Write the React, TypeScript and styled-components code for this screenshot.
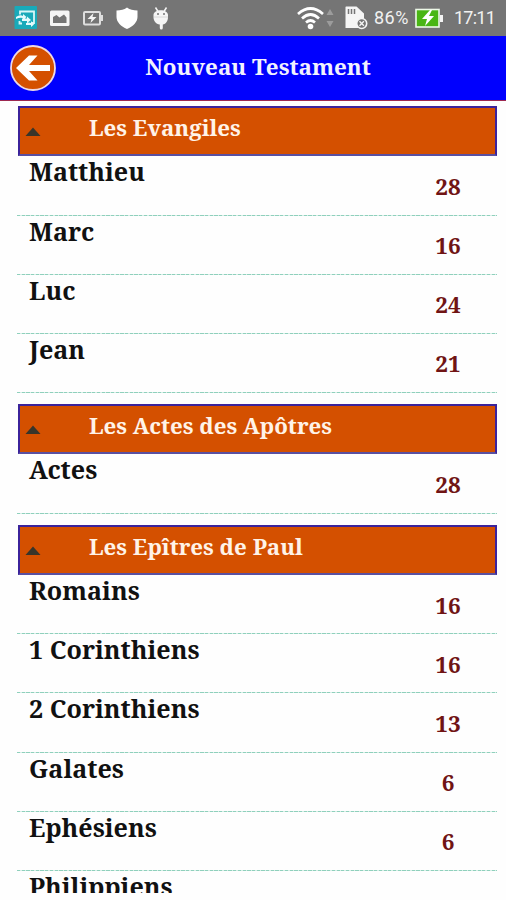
import React from "react";
import styled, { createGlobalStyle } from "styled-components";

const GlobalStyle = createGlobalStyle`
  * { box-sizing: border-box; }
  body { margin: 0; background: #fefefe; }
`;

const serif = `"Noto Serif", "DejaVu Serif Condensed", "DejaVu Serif", serif`;

const Screen = styled.div`
  width: 506px;
  height: 900px;
  display: flex;
  flex-direction: column;
  overflow: hidden;
  background: #fefefe;
  font-family: ${serif};
  font-weight: 700;
`;

const StatusBar = styled.header`
  height: 36px;
  flex: none;
  display: flex;
  justify-content: space-between;
  background: #757575;
`;

const StatusIcons = styled.svg`
  display: block;
  flex: none;
`;

const StatusRight = styled.div`
  display: flex;
  align-items: center;
  width: 212px;
  color: #f1f1f1;
  font: 400 18px/36px Roboto, sans-serif;
`;

const Percent = styled.span`
  width: 40px;
  letter-spacing: 0.5px;
`;

const Clock = styled.span`
  width: 50px;
  letter-spacing: -0.75px;
`;

const TitleBar = styled.div`
  height: 65px;
  flex: none;
  display: grid;
  grid-template-columns: 66px 1fr 56px;
  align-items: center;
  background: #0000fe;
  border-bottom: 1px solid #9c2850;
`;

const BackButton = styled.button`
  width: 48px;
  height: 48px;
  margin-left: 9px;
  padding: 0;
  border: 0;
  background: none;
  svg { display: block; }
`;

const Title = styled.h1`
  margin: 0;
  padding-bottom: 2px;
  text-align: center;
  color: #f2f2ff;
  font-size: 22.4px;
  line-height: 30px;
  white-space: nowrap;
`;

const List = styled.main`
  height: 792px;
  flex: none;
  overflow: hidden;
  padding: 4.9px 9px 0 17px;
`;

const Section = styled.section`
  margin-bottom: 11px;
`;

const SectionHeader = styled.h2`
  height: 50.5px;
  margin: 0 0 0 1px;
  padding: 0 0 5.5px 5px;
  display: grid;
  grid-template-columns: 64px 1fr;
  align-items: center;
  background: #d45000;
  border: 2px solid #3b239b;
  border-bottom-color: #5a50a0;
  color: #fff3e8;
  font-size: 22.3px;
  line-height: 30px;
  white-space: nowrap;
`;

const Marker = styled.svg`
  display: block;
  margin-top: 6.5px;
`;

const Book = styled.div`
  height: 59.15px;
  display: grid;
  grid-template-columns: 1fr 76px;
  padding: 0 11px 0 12px;
`;

const BookName = styled.span`
  color: #111;
  font-size: 25.1px;
  line-height: 30.4px;
  white-space: nowrap;
`;

const Chapters = styled.span`
  padding-top: 14.5px;
  text-align: center;
  color: #701414;
  font-size: 22.5px;
  line-height: 32px;
`;

const Divider = styled.div`
  grid-column: 1 / -1;
  align-self: end;
  height: 1px;
  margin: 0 -11px 0 -12px;
  background: repeating-linear-gradient(90deg, #8fd0bc 0 3.2px, #d5eee6 3.2px 4.7px);
`;

type BookEntry = { name: string; chapters?: number };

const groups: { title: string; books: BookEntry[] }[] = [
  {
    title: "Les Evangiles",
    books: [
      { name: "Matthieu", chapters: 28 },
      { name: "Marc", chapters: 16 },
      { name: "Luc", chapters: 24 },
      { name: "Jean", chapters: 21 },
    ],
  },
  { title: "Les Actes des Apôtres", books: [{ name: "Actes", chapters: 28 }] },
  {
    title: "Les Epîtres de Paul",
    books: [
      { name: "Romains", chapters: 16 },
      { name: "1 Corinthiens", chapters: 16 },
      { name: "2 Corinthiens", chapters: 13 },
      { name: "Galates", chapters: 6 },
      { name: "Ephésiens", chapters: 6 },
      { name: "Philippiens" },
    ],
  },
];

const NotificationIcons = () => (
  <StatusIcons width="180" height="36" viewBox="0 0 180 36" fill="none">
    <rect x="14.5" y="6" width="22.5" height="23" rx="1" fill="#19aaba" />
    <path d="M20 14.500V11.500H34V23H32M22 23.500H19.500V21" stroke="#d9f7f8" strokeWidth="1.8" />
    <path d="M16 17q4-3 7-1v-2l3.500 3-3.500 3v-2q-3-1-7 1zM22 18.500h5v-2l4 3.500-4 3v-2h-5zM26 23q3-1 5 0v-2l3 3.500-3 2.500v-2h-5z" fill="#e6fbfc" />
    <rect x="50" y="10.5" width="19.5" height="15.5" rx="1.5" fill="#f5f5f5" />
    <path d="M53 23v-6l3.500-2 3 2.500 4.500-3 2.500 3V23z" fill="#757575" />
    <rect x="84" y="12" width="16" height="12.5" rx="1" stroke="#dedede" strokeWidth="2" />
    <path d="M101 15h2v6h-2z" fill="#dedede" />
    <path d="m93.500 13-6 6h4l-1 4 6-6h-4z" fill="#f4f4f4" />
    <path d="M127 7.500c3 2.300 6 2.800 10.500 3v6.500c0 5-4.500 9.500-10.500 12-6-2.500-10.500-7-10.500-12v-6.500c4.500-.2 7.500-.7 10.500-3z" fill="#fff" />
    <path d="M153.500 15c0-6.500 14.500-6.500 14.500 0v2c0 4-2 7-5.200 7.500V28a1.500 1.500 0 0 1-3 0v-3.500c-4-.5-6.300-3.500-6.300-7.500z" fill="#f5f5f5" />
    <path d="m155.500 7.500 2.500 4m8.500-4-2.500 4" stroke="#f5f5f5" strokeWidth="1.5" />
    <circle cx="158" cy="14" r="1" fill="#757575" />
    <circle cx="164" cy="14" r="1" fill="#757575" />
    <path d="M154 17h14" stroke="#d0d0d0" strokeWidth=".8" />
  </StatusIcons>
);

const ConnectionIcons = () => (
  <StatusIcons width="80" height="36" viewBox="294 0 80 36" fill="none">
    <path d="M298 14q12.500-11 25 0M302 18.500q8.500-8 17 0M306 22.500q4.500-4 9 0" stroke="#fff" strokeWidth="2.7" />
    <circle cx="310.500" cy="26.500" r="2.800" fill="#fff" />
    <path d="m330 9 3.500 6h-7zM330 27l3.500-6h-7z" fill="#9c9c9c" />
    <path d="M346 6.500h10.500l7.500 7V28h-18.500V7z" fill="#f5f5f5" />
    <path d="M348.500 9v5m3-5v5m3-5v5" stroke="#757575" strokeWidth="1.500" />
    <circle cx="361.700" cy="23.500" r="5" fill="#757575" stroke="#f5f5f5" strokeWidth="1.600" />
    <path d="m359.500 21.300 4.400 4.400m0-4.400-4.400 4.400" stroke="#f5f5f5" strokeWidth="1.400" />
  </StatusIcons>
);

const Battery = () => (
  <StatusIcons width="40" height="36" viewBox="0 0 40 36" fill="none">
    <rect x="2" y="9.500" width="23" height="17.500" fill="#49b614" stroke="#eef9e9" strokeWidth="1.600" />
    <path d="M26 15h3v7h-3z" fill="#f4f4f4" />
    <path d="m16 10-8 9h5l-2 7 9-10h-5l3-6z" fill="#fff" />
  </StatusIcons>
);

export default function App() {
  return (
    <Screen>
      <GlobalStyle />
      <StatusBar>
        <NotificationIcons />
        <StatusRight>
          <ConnectionIcons />
          <Percent>86%</Percent>
          <Battery />
          <Clock>17:11</Clock>
        </StatusRight>
      </StatusBar>
      <TitleBar>
        <BackButton aria-label="Retour">
          <svg width="48" height="48" viewBox="0 0 48 48">
            <circle cx="24" cy="24" r="22" fill="#d45000" stroke="#eed8e4" strokeWidth="1.8" />
            <path d="M41 21H20l8.500-9.500h-8.500L7 24l13 12.500h8.500L20 27H41z" fill="#fff" />
          </svg>
        </BackButton>
        <Title>Nouveau Testament</Title>
      </TitleBar>
      <List>
        {groups.map((group) => (
          <Section key={group.title}>
            <SectionHeader>
              <Marker width="16" height="9" viewBox="0 0 16 9">
                <path d="M.5 9 8 .5l7.500 8.500z" fill="#38352a" />
              </Marker>
              {group.title}
            </SectionHeader>
            {group.books.map(({ name, chapters }) => (
              <Book key={name}>
                <BookName>{name}</BookName>
                {chapters !== undefined && <Chapters>{chapters}</Chapters>}
                <Divider />
              </Book>
            ))}
          </Section>
        ))}
      </List>
    </Screen>
  );
}
